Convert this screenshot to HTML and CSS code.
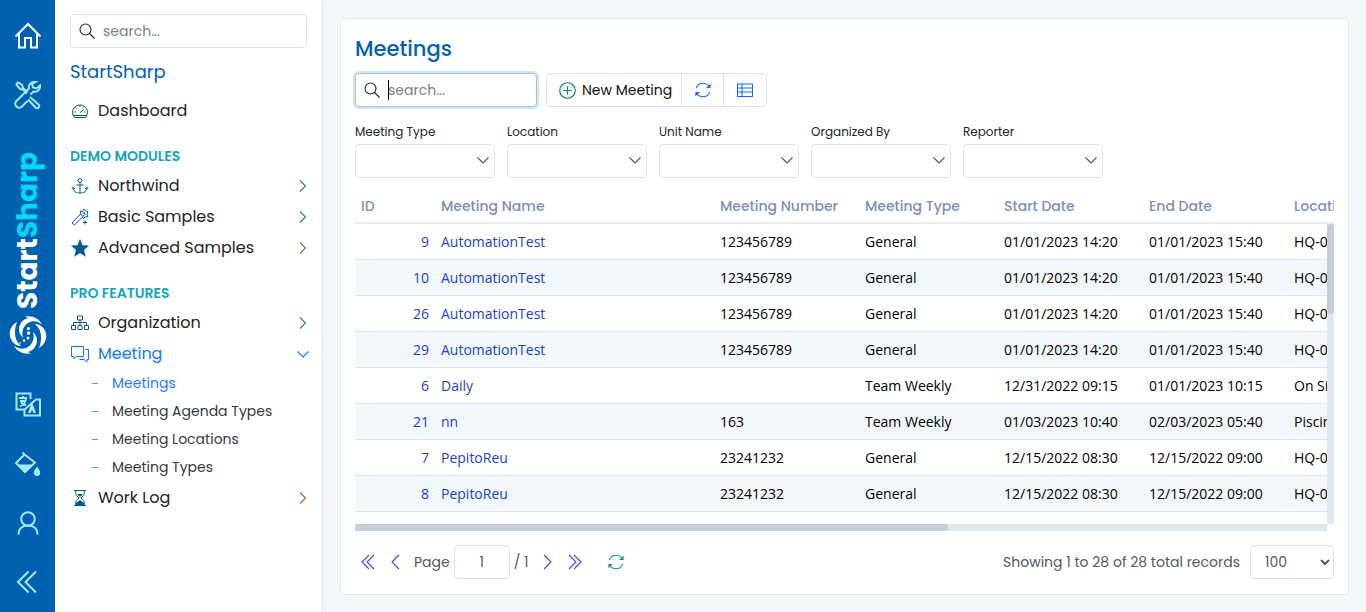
FILE: index.html
```html
<!DOCTYPE html>
<html lang="en">
<head>
<meta charset="utf-8">
<title>Meetings - StartSharp</title>
<link rel="stylesheet" href="styles.css">
</head>
<body>
<svg class="symbols" aria-hidden="true">
  <symbol id="chev-right" viewBox="0 0 16 16"><path d="M5 2.500L10.500 8 5 13.500"/></symbol>
  <symbol id="chev-left" viewBox="0 0 16 16"><path d="M11 1L4 8l7 7"/></symbol>
  <symbol id="chev-down" viewBox="0 0 16 16"><path d="M2.500 5.500L8 11l5.500-5.500"/></symbol>
  <symbol id="dbl-left" viewBox="0 0 16 16"><path d="M9 1L2 8l7 7M14 1L7 8l7 7"/></symbol>
  <symbol id="search" viewBox="0 0 16 16"><circle cx="6.500" cy="6.500" r="5.500"/><path d="M10.500 10.500l5 5"/></symbol>
  <symbol id="refresh" viewBox="0 0 16 16"><path d="M1.200 6.200C2.200 3.200 4.800 1.200 8 1.200c2.600 0 4.800 1.200 6.200 3.300M14.800 9.800c-1 3-3.600 5-6.800 5-2.600 0-4.800-1.200-6.200-3.300"/><path d="M15.600 1.500v4.500h-4.500zM.4 14.500v-4.500h4.500z" fill="currentColor" stroke="none"/></symbol>
</svg>
<div class="app">
  <nav class="rail" aria-label="Modules">
    <div class="rail-group">
      <a class="rail-link active" href="#" aria-label="Home"><svg viewBox="0 0 28 28"><path d="M1.500 14.500L14 2l12.500 12.500M5 12v13.500h6V16h6v9.500h6V12"/></svg></a>
      <a class="rail-link" href="#" aria-label="Tools"><svg viewBox="0 0 28 28"><path d="M2 3.500L4 1.500l4 2.500 1 3 4.500 4.500M3.500 5L2 3.500M3.500 5l2.500 3 3 .5 4 4M16 16l8.500 7.500a2 2 0 0 1-3 3L14 18.500M16.500 13.500l3-3c4 1 7-2 6.500-6l-3.500 3-3.500-1-1-3.500 3.500-2c-4-.5-7.500 2.500-6.500 6.500L2 20.500c-2.500 3.500 2 8 5.500 5.500l6-6"/></svg></a>
    </div>
    <a class="brand" href="#" aria-label="StartSharp home">
      <span class="brand-name">Start<span class="brand-accent">Sharp</span></span>
      <svg class="brand-mark" viewBox="0 0 40 40">
        <path d="M17 1.500c8-1 14 2 17 8-5-4-10-4-14-1.500-4 2.500-7 8-5 15-4-4-5-9-3-13 1-3 4-6 8-7-1-.8-2-1.200-3-1.500z"/>
        <path d="M23 38.500c-8 1-14-2-17-8 5 4 10 4 14 1.500 4-2.500 7-8 5-15 4 4 5 9 3 13-1 3-4 6-8 7 1 .8 2 1.200 3 1.500z"/>
        <path d="M9 7C2 11-.5 19 4 26c2 3 5 5 9 5C7 26 5 18 9 7z"/>
        <path d="M31 33c7-4 9.500-12 5-19-2-3-5-5-9-5 6 5 8 13 4 24z"/>
        <circle cx="20.500" cy="13.500" r="1.500"/><circle cx="20.500" cy="18" r="1.700"/><circle cx="20" cy="23" r="1.500"/><circle cx="16" cy="25.500" r="1.200"/><circle cx="12" cy="28" r=".8"/>
      </svg>
    </a>
    <div class="rail-group">
      <a class="rail-link" href="#" aria-label="Language"><svg viewBox="0 0 28 28"><path d="M16.500 8V2.500h-14v16h8M10 19l12-10.500h4v16H10.500V19"/><path d="M5 7h8M9 5v2M6 10h6M12 7c0 4-3 7-6 8M7 11c1 2 3 3 5 3"/><path d="M14 22l4-11 4 11h-2.500l-1.500-3-1.500 3z" fill="currentColor" stroke="none"/></svg></a>
      <a class="rail-link" href="#" aria-label="Theme"><svg viewBox="0 0 28 28"><path d="M8.500 2.500l2 2M10.500 4.500L2 13l9 9 10-9.500-10.500-8z"/><path d="M4 14.500h15.500L11 23zM23 16.500c-2 3-3.200 4.500-3.200 6.300a3.200 3.200 0 0 0 6.400 0c0-1.800-1.200-3.300-3.200-6.300z" fill="currentColor" stroke="none"/></svg></a>
      <a class="rail-link" href="#" aria-label="Account"><svg viewBox="0 0 28 28"><circle cx="14" cy="10" r="6.800"/><path d="M4.500 25.500c0-6 4-9 9.500-9s9.500 3 9.500 9"/></svg></a>
      <button class="rail-link" type="button" aria-label="Collapse menu"><svg viewBox="0 0 28 28"><path d="M14.500 3.500L4 14l10.500 10.500M22 3.500L11.500 14 22 24.500"/></svg></button>
    </div>
  </nav>

  <aside class="sidebar">
    <label class="search-box"><svg class="icon"><use href="#search"/></svg><input type="search" placeholder="search..." aria-label="Search menu"></label>
    <h2 class="side-title">StartSharp</h2>
    <ul class="menu">
      <li><a class="menu-link" href="#"><svg class="menu-icon" viewBox="0 0 18 18"><path d="M3.500 15.500A7.500 7.500 0 1 1 14.500 15.500zM2 13.500h14M9 10.500l4-3M9 3.500v1.500M4.500 5.500l1 1M3.500 10H5M13 10h1.500M12.500 4.500l-.5 1"/></svg>Dashboard</a></li>
    </ul>
    <h3 class="menu-heading">DEMO MODULES</h3>
    <ul class="menu">
      <li><a class="menu-link" href="#"><svg class="menu-icon" viewBox="0 0 18 18"><circle cx="9" cy="3.500" r="1.900"/><path d="M9 5.500V16M5.500 8h7M2 10.500c0 4 3.500 5.500 7 5.500s7-1.500 7-5.500M.8 12L2 10.200 4 12M14 12l2-1.800 1.200 1.800"/></svg>Northwind<svg class="icon menu-arrow"><use href="#chev-right"/></svg></a></li>
      <li><a class="menu-link" href="#"><svg class="menu-icon" viewBox="0 0 18 18"><path d="M1 15l8.500-9 2.500 2.500L3.500 17zM10 6l-1-3 2.500.5L13 1l1.500 1.800L17 3.500l-1 2.500 1 2.500-3 .5-1.500 2-1-2.500M11.500 5.500l2-1 .5 2-1.500 1.500M14 12.500v4M12 14.500h4"/></svg>Basic Samples<svg class="icon menu-arrow"><use href="#chev-right"/></svg></a></li>
      <li><a class="menu-link" href="#"><svg class="menu-icon" viewBox="0 0 18 18"><path fill="currentColor" stroke="none" d="M9 0l2.500 6.300 6.500.3-5 4.300 1.700 6.800L9 14l-5.700 3.700L5 10.900 0 6.600l6.500-.3z"/></svg>Advanced Samples<svg class="icon menu-arrow warm"><use href="#chev-right"/></svg></a></li>
    </ul>
    <h3 class="menu-heading">PRO FEATURES</h3>
    <ul class="menu">
      <li><a class="menu-link" href="#"><svg class="menu-icon" viewBox="0 0 18 18"><path d="M6.500 2h5v4h-5zM.5 11.500h4v4h-4zM7 11.500h4v4H7zM13.500 11.500h4v4h-4zM9 6v5.500M2.500 11.500v-3h13v3"/></svg>Organization<svg class="icon menu-arrow"><use href="#chev-right"/></svg></a></li>
      <li><a class="menu-link current" href="#"><svg class="menu-icon" viewBox="0 0 18 18"><path d="M.5 1.500h12v10h-7L3 14v-2.500H.5zM14.500 4.500h3v10H16V17l-3-2.500H8.500"/></svg>Meeting<svg class="icon menu-arrow"><use href="#chev-down"/></svg></a>
        <ul class="submenu">
          <li><a class="submenu-link current" href="#">Meetings</a></li>
          <li><a class="submenu-link" href="#">Meeting Agenda Types</a></li>
          <li><a class="submenu-link" href="#">Meeting Locations</a></li>
          <li><a class="submenu-link" href="#">Meeting Types</a></li>
        </ul>
      </li>
      <li><a class="menu-link" href="#"><svg class="menu-icon" viewBox="0 0 18 18"><path d="M3 1.500h12M3 16.500h12M4.800 2v3.500L8 9l-3.200 3.500V16M13.200 2v3.500L10 9l3.200 3.500V16"/><path d="M5 16v-2l4-3 4 3v2zM6 5h6L9 8z" fill="currentColor" stroke="none"/></svg>Work Log<svg class="icon menu-arrow warm"><use href="#chev-right"/></svg></a></li>
    </ul>
  </aside>

  <main class="content">
    <section class="card">
      <h1 class="card-title">Meetings</h1>
      <div class="toolbar">
        <label class="search-box focused"><svg class="icon"><use href="#search"/></svg><span class="field"><input type="search" placeholder="search..." aria-label="Search meetings"><span class="caret"></span></span></label>
        <div class="button-group">
          <button class="tool-button" type="button"><svg class="icon green" viewBox="0 0 16 16"><circle cx="8" cy="8" r="7.300"/><path d="M8 4v8M4 8h8"/></svg>New Meeting</button>
          <button class="tool-button" type="button" aria-label="Refresh"><svg class="icon blue"><use href="#refresh"/></svg></button>
          <button class="tool-button" type="button" aria-label="Columns"><svg class="icon blue" viewBox="0 0 16 16"><path d="M.5 2h15v12.500H.5zM.5 6h15M.5 10h15M5 2v12.500"/></svg></button>
        </div>
      </div>
      <div class="filters">
        <label class="filter">Meeting Type<span class="select-wrap"><select><option></option></select><svg class="icon"><use href="#chev-down"/></svg></span></label>
        <label class="filter">Location<span class="select-wrap"><select><option></option></select><svg class="icon"><use href="#chev-down"/></svg></span></label>
        <label class="filter">Unit Name<span class="select-wrap"><select><option></option></select><svg class="icon"><use href="#chev-down"/></svg></span></label>
        <label class="filter">Organized By<span class="select-wrap"><select><option></option></select><svg class="icon"><use href="#chev-down"/></svg></span></label>
        <label class="filter">Reporter<span class="select-wrap"><select><option></option></select><svg class="icon"><use href="#chev-down"/></svg></span></label>
      </div>
      <div class="grid">
        <div class="grid-view">
          <table class="data">
            <colgroup><col class="c-id"><col class="c-name"><col class="c-number"><col class="c-type"><col class="c-date"><col class="c-date"><col></colgroup>
            <thead><tr><th>ID</th><th>Meeting Name</th><th>Meeting Number</th><th>Meeting Type</th><th>Start Date</th><th>End Date</th><th>Location</th></tr></thead>
            <tbody>
              <tr><td><a href="#">9</a></td><td><a href="#">AutomationTest</a></td><td>123456789</td><td>General</td><td>01/01/2023 14:20</td><td>01/01/2023 15:40</td><td>HQ-01</td></tr>
              <tr><td><a href="#">10</a></td><td><a href="#">AutomationTest</a></td><td>123456789</td><td>General</td><td>01/01/2023 14:20</td><td>01/01/2023 15:40</td><td>HQ-01</td></tr>
              <tr><td><a href="#">26</a></td><td><a href="#">AutomationTest</a></td><td>123456789</td><td>General</td><td>01/01/2023 14:20</td><td>01/01/2023 15:40</td><td>HQ-01</td></tr>
              <tr><td><a href="#">29</a></td><td><a href="#">AutomationTest</a></td><td>123456789</td><td>General</td><td>01/01/2023 14:20</td><td>01/01/2023 15:40</td><td>HQ-01</td></tr>
              <tr><td><a href="#">6</a></td><td><a href="#">Daily</a></td><td></td><td>Team Weekly</td><td>12/31/2022 09:15</td><td>01/01/2023 10:15</td><td>On Site</td></tr>
              <tr><td><a href="#">21</a></td><td><a href="#">nn</a></td><td>163</td><td>Team Weekly</td><td>01/03/2023 10:40</td><td>02/03/2023 05:40</td><td>Piscina</td></tr>
              <tr><td><a href="#">7</a></td><td><a href="#">PepitoReu</a></td><td>23241232</td><td>General</td><td>12/15/2022 08:30</td><td>12/15/2022 09:00</td><td>HQ-01</td></tr>
              <tr><td><a href="#">8</a></td><td><a href="#">PepitoReu</a></td><td>23241232</td><td>General</td><td>12/15/2022 08:30</td><td>12/15/2022 09:00</td><td>HQ-01</td></tr>
            </tbody>
          </table>
        </div>
        <div class="track-y"><div class="thumb-y"></div></div>
        <div class="track-x"><div class="thumb-x"></div></div>
      </div>
      <footer class="pager">
        <button class="page-button" type="button" aria-label="First page"><svg class="icon"><use href="#dbl-left"/></svg></button>
        <button class="page-button" type="button" aria-label="Previous page"><svg class="icon"><use href="#chev-left"/></svg></button>
        <label class="page-field">Page<input type="text" value="1"></label>
        <span class="page-total">/ 1</span>
        <button class="page-button flip" type="button" aria-label="Next page"><svg class="icon"><use href="#chev-left"/></svg></button>
        <button class="page-button flip" type="button" aria-label="Last page"><svg class="icon"><use href="#dbl-left"/></svg></button>
        <button class="page-button reload" type="button" aria-label="Reload"><svg class="icon"><use href="#refresh"/></svg></button>
        <span class="page-status">Showing 1 to 28 of 28 total records</span>
        <select class="page-size" aria-label="Rows per page"><option>100</option></select>
      </footer>
    </section>
  </main>
</div>
</body>
</html>
```

FILE: styles.css
```css
* { box-sizing: border-box; }
body {
  margin: 0;
  background: #f2f7fa;
  color: #212529;
  font-family: Poppins, Inter, "Open Sans", sans-serif;
  font-size: 14px;
}
a { color: inherit; text-decoration: none; }
button, input, select { font: inherit; color: inherit; }
button { background: none; border: 0; padding: 0; cursor: pointer; }
h1, h2, h3, ul { margin: 0; padding: 0; list-style: none; }
svg { fill: none; stroke: currentColor; flex: none; }
.symbols { position: absolute; width: 0; height: 0; }
.icon { width: 16px; height: 16px; stroke-width: 1.1; }

.app { display: flex; height: 100vh; }

/* icon rail */
.rail {
  position: relative;
  z-index: 1;
  flex: none;
  width: 55px;
  padding: 6px 0 1px;
  display: flex;
  flex-direction: column;
  justify-content: space-between;
  background: #0061b1;
  color: #a5e9fd;
}
.rail-group { display: flex; flex-direction: column; }
.rail-link { display: flex; align-items: center; justify-content: center; height: 59px; }
.rail-link.active { color: #fff; }
.rail-link svg { width: 28px; height: 28px; stroke-width: 2; }
.brand { display: flex; flex-direction: column; align-items: center; gap: 6px; padding-top: 8px; color: #fff; }
.brand-name {
  writing-mode: vertical-rl;
  transform: rotate(180deg);
  font-size: 28px;
  font-weight: 700;
  line-height: 32px;
}
.brand-accent { color: #00d9f9; }
.brand-mark { width: 40px; height: 40px; fill: currentColor; stroke: none; }

/* sidebar */
.sidebar {
  flex: none;
  width: 266px;
  padding: 14px 14px 14px 15px;
  background: #fff;
  box-shadow: 0 0 6px #d5dfe6;
  overflow: hidden;
}
.search-box {
  display: flex;
  align-items: center;
  gap: 8px;
  height: 34px;
  padding: 0 8px;
  border: 1px solid #dee2e6;
  border-radius: 4px;
  background: #fff;
}
.search-box input { width: 100%; min-width: 0; height: 20px; padding: 0; border: 0; outline: 0; background: none; }
.search-box input::placeholder { color: #7b7f83; opacity: 1; }
.side-title { margin: 12px 0 11px; color: #0061b1; font-size: 18px; font-weight: 400; line-height: 24px; }
.menu-heading { margin: 20px 0 4px; color: #12a5bd; font-size: 14px; font-weight: 600; line-height: 20px; }
.menu-link { display: flex; align-items: center; gap: 9px; height: 31px; padding-left: 1px; font-size: 16px; }
.menu-icon { width: 18px; height: 18px; color: #055a8c; }
.menu-arrow { margin-left: auto; margin-right: -4px; color: #2f7698; }
.menu-arrow.warm { color: #a0643a; }
.menu-link.current, .current svg { color: #0d7afd; }
.submenu { padding-bottom: 1px; }
.submenu-link { display: flex; align-items: center; gap: 14px; height: 28px; padding-left: 22px; color: #343a40; }
.submenu-link.current { color: #2b78f8; }
.submenu-link::before { content: ""; width: 6px; height: 1px; background: #4a9fc4; }

/* content */
.content { flex: 1; min-width: 0; display: flex; padding: 18px 17px 17px 19px; }
.card {
  flex: 1;
  min-width: 0;
  display: flex;
  flex-direction: column;
  padding: 14px 14px 15px;
  background: #fff;
  border: 1px solid #e4e9ed;
  border-radius: 4px;
}
.card-title { color: #0061b1; font-size: 21px; font-weight: 500; line-height: 32px; }
.toolbar { display: flex; gap: 9px; margin-top: 8px; }
.toolbar .search-box { width: 182px; }
.search-box.focused { border-color: #a3c3e0; box-shadow: 0 0 0 2px #d0e4f4; }
.field { position: relative; display: flex; flex: 1; min-width: 0; }
.caret { position: absolute; left: 0; top: 0; width: 1px; height: 20px; background: #000; }
.button-group { display: flex; border: 1px solid #dee2e6; border-radius: 4px; height: 34px; }
.tool-button { display: flex; align-items: center; gap: 6px; padding: 0 12px; color: #111; }
.tool-button:first-child { padding: 0 9px 0 12px; }
.tool-button:first-child .icon { width: 17px; height: 17px; }
.tool-button + .tool-button { width: 42px; padding: 0; justify-content: center; border-left: 1px solid #dee2e6; }
.tool-button + .tool-button:last-child { width: 43px; }
.green { color: #128765; }
.blue { color: #1a66ff; }

.filters { display: flex; flex-wrap: wrap; gap: 12px; margin-top: 15px; }
.filter { width: 140px; font-size: 12px; line-height: 20px; }
.select-wrap { position: relative; display: block; margin-top: 2px; }
.select-wrap select {
  display: block;
  width: 100%;
  height: 34px;
  appearance: none;
  border: 1px solid #dee2e6;
  border-radius: 4px;
  background: #fff;
}
.select-wrap .icon { position: absolute; right: 4px; top: 8px; color: #44566c; pointer-events: none; }

/* data grid */
.grid {
  flex: 1;
  min-height: 0;
  margin-top: 12px;
  display: grid;
  grid-template-columns: minmax(0, 1fr) 7px;
  grid-template-rows: 34px minmax(0, 1fr) 7px;
}
.grid-view { grid-area: 1 / 1 / 3 / 3; overflow: auto; scrollbar-width: none; }
.data { width: 1585px; table-layout: fixed; border-collapse: separate; border-spacing: 0; }
.c-id { width: 80px; }
.c-name { width: 279px; }
.c-number { width: 145px; }
.c-type { width: 139px; }
.c-date { width: 145px; }
.data th, .data td { padding: 0 6px; text-align: left; white-space: nowrap; }
.data th { height: 34px; border-bottom: 2px solid #e9edf2; color: #7f8eb8; font-weight: 500; }
.data td { height: 36px; border-bottom: 1px solid #dee5ea; color: #000; font: 14px "Open Sans", "Noto Sans", sans-serif; }
.data td:first-child { text-align: right; }
.data td a { color: #1a43c4; }
.data tbody tr:nth-child(even) { background: #f1f7fa; }
.track-y { grid-area: 2 / 2; background: #dfe6ed; z-index: 1; }
.thumb-y { height: 30%; background: #c6cdda; border-radius: 3px; }
.track-x { grid-area: 3 / 1; background: #dfe6ed; }
.thumb-x { width: 61%; height: 7px; background: #c6cdda; border-radius: 3px; }

/* pager */
.pager { display: flex; align-items: center; margin-top: 14px; margin-left: -1px; color: #54585d; }
.page-button { display: flex; align-items: center; justify-content: center; width: 28px; height: 34px; color: #5b35f0; }
.flip { transform: rotate(180deg); }
.page-field { display: flex; align-items: center; gap: 4px; margin-left: 4px; }
.page-field input { width: 56px; height: 34px; padding: 0; border: 1px solid #dee2e6; border-radius: 4px; text-align: center; }
.page-total { margin: 0 4px; }
.reload { margin-left: 13px; color: #159a78; }
.page-status { margin-left: auto; }
.page-size { width: 84px; height: 34px; margin-left: 10px; padding: 0 0 0 10px; border: 1px solid #dee2e6; border-radius: 4px; background: #fff; }
```
